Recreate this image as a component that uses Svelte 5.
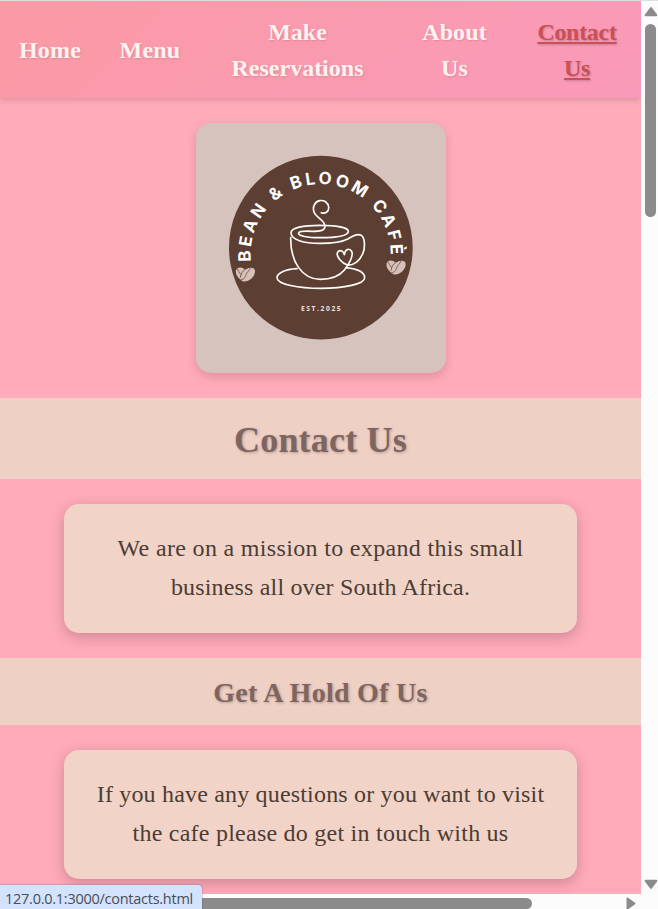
<script>
  const links = [
    { lines: ['Home'], width: 100, spacing: 0.2 },
    { lines: ['Menu'], width: 100, spacing: 0.2 },
    { lines: ['Make', 'Reservations'], width: 195, spacing: 0 },
    { lines: ['About', 'Us'], width: 119, spacing: 0.1 },
    { lines: ['Contact', 'Us'], width: 126, spacing: -0.3, active: true }
  ];
</script>

<div class="window">
  <div class="upper">
    <div class="page">
      <nav>
        {#each links as link}
          <a href="#top" class:active={link.active} style="width: {link.width}px; letter-spacing: {link.spacing}px">
            {#each link.lines as line}<span>{line}</span>{/each}
          </a>
        {/each}
      </nav>
      <svg class="logo" viewBox="18 24 750 750" role="img" aria-label="Bean and Bloom Café">
        <defs>
          <path id="ring" d="M183.2 439.7A210 210 0 1 1 600.8 439.7" />
          <g id="beans">
            <path d="M-28 -13C-25 -23 -10 -24 -1 -15L-14 15C-24 8 -30 -2 -28 -13Z" />
            <path d="M-14 15C-17 -3 -3 -20 17 -21C31 -21 32 -8 24 5C14 20 -4 26 -14 15Z" />
            <path class="seam" d="M-26 -17C-18 -15 -22 -5 -12 0M-14 16C-2 13 -1 8 2 0C5 -9 12 -10 16 -22M-1 -16C-8 -11 -14 -3 -15 9" />
          </g>
        </defs>
        <circle cx="392.5" cy="398" r="275.5" fill="#5c3e32" />
        <text class="name"><textPath href="#ring" textLength="684">BEAN &amp; BLOOM CAFÈ</textPath></text>
        <g class="cup">
          <path d="M394 293C405 298 417 290 416 277C414 261 402 255 389 257C374 260 367 276 372 291C378 308 404 315 405 333C405 349 385 349 368 349C350 348 328 347 326 354C323 363 354 368 389 368C432 368 474 364 475 349C475 337 437 331 389 331C341 331 302 338 303 354C304 374 340 385 390 385C429 385 458 380 475 371C489 363 502 355 514 361C526 369 525 401 519 414C510 437 492 452 472 450C455 444 439 426 442 414C446 402 460 406 463 419C465 402 479 398 485 409C491 422 475 449 464 464C444 488 419 493 391 493C337 493 301 441 302 368" />
          <path d="M321 461C285 463 261 474 261 488C261 508 326 520 393 520C462 520 524 507 524 488C524 473 502 462 468 458" />
        </g>
        <use href="#beans" x="166" y="479" />
        <use href="#beans" x="618" y="458" />
        <text class="est" x="333" y="587" textLength="119">EST.2025</text>
      </svg>
      <h1>Contact Us</h1>
      <section>
        <span style="letter-spacing: 0.33px">We are on a mission to expand this small</span>
        <span style="letter-spacing: 0.17px">business all over South Africa.</span>
      </section>
      <h2>Get A Hold Of Us</h2>
      <section>
        <span style="letter-spacing: 0.18px">If you have any questions or you want to visit</span>
        <span style="letter-spacing: 0.24px">the cafe please do get in touch with us</span>
      </section>
    </div>
    <div class="vbar">
      <svg width="14" height="11" viewBox="0 0 14 11"><path d="M7 2L12.3 9.2H1.7Z" /></svg>
      <div class="vthumb"></div>
      <svg class="down" width="14" height="11" viewBox="0 0 14 11"><path d="M1.7 1.8H12.3L7 9Z" /></svg>
    </div>
  </div>
  <div class="hbar">
    <div class="hthumb"></div>
    <svg width="10" height="13" viewBox="0 0 10 13"><path d="M1.5 1.5L8.5 6.5L1.5 11.5Z" /></svg>
  </div>
  <div class="status">127.0.0.1:3000/contacts.html</div>
</div>

<style>
  :global(body) { margin: 0; overflow: hidden; }
  .window {
    position: relative;
    box-sizing: border-box;
    width: 658px;
    height: 909px;
    border-top: 1px solid #dedede;
    background: #fcfcfc;
    overflow: hidden;
    font-family: "Liberation Serif", serif;
  }
  .upper { display: flex; height: 893px; }
  .page {
    display: flex;
    flex-direction: column;
    align-items: center;
    width: 641px;
    height: 893px;
    overflow: hidden;
    background: #ffabb9;
  }
  nav {
    display: flex;
    flex: none;
    align-items: center;
    width: 641px;
    height: 97px;
    background: linear-gradient(135deg, #fa9aa5, #fa9aba);
    box-shadow: 0 2px 6px rgba(110, 80, 80, 0.25);
  }
  a {
    flex: none;
    display: flex;
    flex-direction: column;
    align-items: center;
    color: #fff3f1;
    font-size: 24px;
    font-weight: 700;
    line-height: 36px;
    text-decoration: none;
    text-shadow: 1px 1px 2px rgba(0, 0, 0, 0.12);
  }
  a.active { color: #c95054; text-shadow: 1px 1px 2px rgba(0, 0, 0, 0.2); }
  a.active span {
    text-decoration: underline;
    text-decoration-thickness: 2px;
    text-underline-offset: 2px;
    text-decoration-skip-ink: none;
  }
  .logo {
    flex: none;
    width: 250px;
    height: 250px;
    margin: 25px 0 25px 1px;
    border-radius: 15px;
    background: #d6c3bd;
    box-shadow: 0 4px 10px rgba(120, 60, 70, 0.22);
  }
  .name { font: 700 51px Inter, sans-serif; fill: #fff; }
  .est { font: 700 20px "Open Sans", sans-serif; fill: #eee3df; }
  .cup path { fill: none; stroke: #fffdfa; stroke-width: 5; stroke-linecap: round; stroke-linejoin: round; }
  #beans { fill: #d6c0b9; }
  .seam { fill: none; stroke: #7d6055; stroke-width: 3; }
  h1, h2 {
    flex: none;
    width: 641px;
    margin: 0;
    background: #efd0c5;
    color: #7f655f;
    text-align: center;
    text-shadow: 1px 1px 3px rgba(0, 0, 0, 0.25);
  }
  h1 { height: 81px; font-size: 36px; line-height: 85px; letter-spacing: 0.2px; }
  h2 { height: 67px; font-size: 28px; line-height: 69px; letter-spacing: 0.28px; }
  section {
    flex: none;
    box-sizing: border-box;
    display: flex;
    flex-direction: column;
    align-items: center;
    width: 513px;
    height: 129px;
    margin: 25px 0;
    padding-top: 25px;
    border-radius: 15px;
    background: #f2d3c8;
    box-shadow: 0 4px 14px rgba(80, 40, 50, 0.28);
    color: #4b3d33;
    font-size: 24px;
    line-height: 39px;
    white-space: nowrap;
  }
  .vbar {
    display: flex;
    flex-direction: column;
    align-items: center;
    box-sizing: border-box;
    width: 17px;
    padding: 5px 0 4px 2px;
  }
  .vbar svg, .hbar svg { flex: none; fill: #8b8b8b; stroke: #8b8b8b; stroke-width: 2; stroke-linejoin: round; }
  .vthumb { width: 11px; height: 193px; margin-top: 7px; border-radius: 6px; background: #8b8b8b; }
  .down { margin-top: auto; }
  .hbar { display: flex; align-items: flex-start; height: 15px; padding: 4px 22px 0 16px; }
  .hbar svg { margin: -1px 0 0 auto; }
  .hthumb { width: 516px; height: 11px; border-radius: 6px; background: #8b8b8b; }
  .status {
    position: absolute;
    left: 0;
    bottom: 0;
    box-sizing: border-box;
    width: 202px;
    height: 24px;
    padding-left: 5px;
    border-radius: 0 4px 0 0;
    background: #d3e3fd;
    box-shadow: 0 0 2px rgba(60, 60, 80, 0.6);
    color: #4a4d52;
    font: 14.5px/27px "Open Sans", sans-serif;
    letter-spacing: -0.26px;
    white-space: nowrap;
  }
</style>
